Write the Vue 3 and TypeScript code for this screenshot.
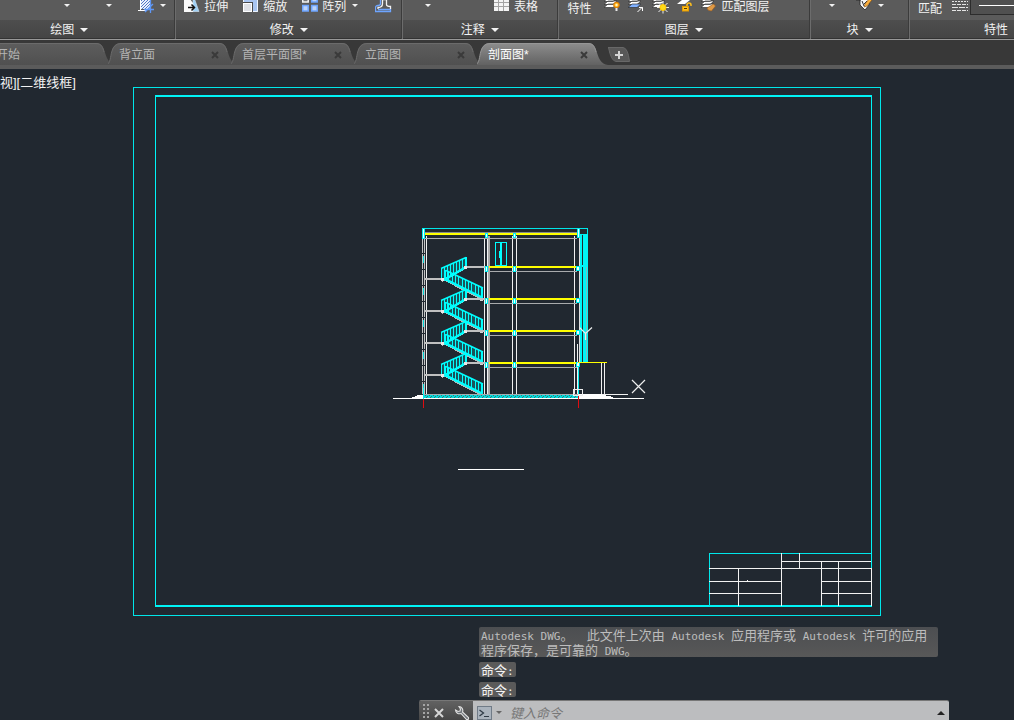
<script setup lang="ts">
import { ref } from 'vue'

interface Tab { name: string; closable: boolean }

const tabs: Tab[] = [
  { name: '开始', closable: false },
  { name: '背立面', closable: true },
  { name: '首层平面图*', closable: true },
  { name: '立面图', closable: true },
  { name: '剖面图*', closable: true },
]
const active = ref(4)
const command = ref('')

const storeys = [0, 32, 64, 96]

// Balusters of the two flights in one storey, relative to the top storey
const upFlight = Array.from({ length: 9 }, (_, i) => {
  const x = 441.5 + i * 3
  return `M${x} ${Math.round(268 - i * 1.35)}V${Math.round(280 - i * 1.6)}`
}).join('')
const downFlight = Array.from({ length: 12 }, (_, i) => {
  const x = 445.5 + i * 3.3
  return `M${Math.floor(x) + 0.5} ${Math.round(270 + i * 1.5)}V${Math.round(281 + i * 1.5)}`
}).join('')
</script>

<template>
  <div class="app">
    <header class="ribbon">
      <section class="panel p-draw">
        <div class="tools">
          <div class="pair">
            <button class="drop" aria-label="圆弧选项"><i class="caret small"></i></button>
            <button class="drop" aria-label="矩形选项"><i class="caret small"></i></button>
          </div>
          <div class="split">
            <button class="tool" aria-label="图案填充">
              <svg width="16" height="16" viewBox="0 0 16 16">
                <rect x="2" y="0" width="10" height="10" fill="#eaf1fd" />
                <path d="M2 3l3-3M2 6l6-6M2 9l9-9M4 10l8-8M7 10l5-5M10 10l2-2" stroke="#5577c4" />
                <path d="M2.500 0v11.500M0 11.500h8" stroke="#fff" fill="none" />
                <path d="M12.500 0v14M6 10.500h10M7 13l8-8" stroke="#5f97f5" stroke-width="1.300" fill="none" />
              </svg>
            </button>
            <button class="drop" aria-label="图案填充选项"><i class="caret small"></i></button>
          </div>
        </div>
        <button class="title">绘图<i class="caret"></i></button>
      </section>

      <section class="panel p-modify">
        <div class="tools">
          <button class="tool">
            <svg width="16" height="16" viewBox="0 0 16 16">
              <path d="M9 0h1.500l4.500 12.500H9z" fill="#9fd0f5" stroke="#d5eafa" stroke-width=".6" />
              <path d="M0 0h6l3 4v9H0z" fill="#fbfbfb" />
              <path d="M4 8.500h6M7.500 5.500l3 3-3 3" stroke="#111" stroke-width="1.500" fill="none" />
            </svg>拉伸
          </button>
          <button class="tool">
            <svg width="16" height="16" viewBox="0 0 16 16">
              <path d="M0 0h15v13H9V4H0z" fill="#a9c6f2" />
              <path d="M.5 0v3.500M14.500 0v12.500H10" stroke="#eef4fd" fill="none" />
              <rect x="0.500" y="4.500" width="8" height="8" fill="#dfe1e6" stroke="#fff" />
              <path d="M9.500 3v10M0 3.500h10" stroke="#4b4b4b" />
            </svg>缩放
          </button>
          <div class="split">
            <button class="tool">
              <svg width="16" height="16" viewBox="0 0 16 16" stroke-width="1.500">
                <rect x="0.700" y="-2.500" width="5.500" height="5.500" fill="#777" stroke="#f4f4f4" />
                <rect x="9.700" y="-2.500" width="5.500" height="5.500" fill="#bcd4fa" stroke="#6ea5ff" />
                <rect x="0.700" y="6.500" width="5.500" height="5.500" fill="#bcd4fa" stroke="#6ea5ff" />
                <rect x="9.700" y="6.500" width="5.500" height="5.500" fill="#bcd4fa" stroke="#6ea5ff" />
              </svg>阵列
            </button>
            <button class="drop" aria-label="阵列选项"><i class="caret small"></i></button>
          </div>
          <button class="tool" aria-label="偏移">
            <svg width="17" height="16" viewBox="0 0 17 16" fill="none">
              <path d="M5.500 0v4.500Q5.500 6.500 3 6.500.5 6.500.5 9V12.500H15.500V10.500H3" stroke="#6ea5ff" stroke-width="1.300" />
              <path d="M7.500 0v4.500Q7.500 8.500 3 8.500V10M11.500 0v5.500Q11.500 7.500 15.500 7.500V10M7 .5h5" stroke="#f3f3f3" stroke-width="1.300" />
            </svg>
          </button>
        </div>
        <button class="title">修改<i class="caret"></i></button>
      </section>

      <section class="panel p-note">
        <div class="tools">
          <button class="drop" aria-label="引线选项"><i class="caret small"></i></button>
          <button class="tool">
            <svg width="16" height="16" viewBox="0 0 16 16">
              <path d="M0 0h15v12H0z" fill="#f4f4f4" />
              <path d="M0 3.500h15M0 7.500h15M4.500 0v12M9.500 0v12" stroke="#a3a3a3" />
            </svg>表格
          </button>
        </div>
        <button class="title">注释<i class="caret"></i></button>
      </section>

      <section class="panel p-layer">
        <div class="tools">
          <button class="tool low">特性</button>
          <div class="layer-icons">
            <button class="tool" aria-label="关闭图层">
              <svg width="16" height="16" viewBox="0 0 16 16">
                <path d="M4 -1h9l-4 3.500H0zM4 2h9l-4 3.500H0zM4 5h9l-4 3.500H0z" fill="#fff" stroke="#333" stroke-width=".7" />
                <circle cx="12.500" cy="6" r="2.800" fill="#ffb21d" stroke="#e07b00" />
                <circle cx="12.500" cy="6" r="1.200" fill="#fff6c0" />
                <path d="M12.500 9v3" stroke="#e8e8e8" stroke-width="2" />
              </svg>
            </button>
            <button class="tool" aria-label="隔离图层">
              <svg width="16" height="16" viewBox="0 0 16 16">
                <path d="M4 -1h9l-4 3.500H0zM4 2h9l-4 3.500H0z" fill="#fff" stroke="#333" stroke-width=".7" />
                <path d="M4 5h9l-4 3.500H0z" fill="#7fb0ff" stroke="#333" stroke-width=".7" />
                <path d="M9.500 13l5-5M11 8.500h3.500V12" stroke="#fff" fill="none" />
              </svg>
            </button>
            <button class="tool" aria-label="冻结图层">
              <svg width="17" height="16" viewBox="0 0 17 16">
                <path d="M4 -1h9l-4 3.500H0zM4 2h9l-4 3.500H0zM4 5h9l-4 3.500H0z" fill="#fff" stroke="#333" stroke-width=".7" />
                <path d="M6.500 4l9 9M6.500 13l9-9M11 2.500v12M5 8.500h12" stroke="#eee" />
                <circle cx="11" cy="8.500" r="3" fill="#ffdc19" stroke="#ffc400" />
              </svg>
            </button>
            <button class="tool" aria-label="解锁图层">
              <svg width="16" height="16" viewBox="0 0 16 16">
                <path d="M5 1h8L8 5H0z" fill="#fff" />
                <path d="M10 8V6q0-2 2-2t2 2v1" stroke="#ffc01d" stroke-width="1.500" fill="none" />
                <rect x="5.500" y="7.500" width="6" height="4.500" fill="#ffc01d" stroke="#e59b00" />
                <path d="M7 9.500h3" stroke="#553a00" />
              </svg>
            </button>
            <button class="tool tight">
              <svg width="16" height="16" viewBox="0 0 16 16">
                <path d="M4 -1h9l-4 3.500H0zM4 2h9l-4 3.500H0zM4 5h9l-4 3.500H0z" fill="#fff" stroke="#333" stroke-width=".7" />
                <path d="M12.500 5l2 2-4 5q-4 0-4.500-3z" fill="#e09a45" stroke="#9a5a1c" stroke-width=".6" />
              </svg>匹配图层
            </button>
          </div>
        </div>
        <button class="title">图层<i class="caret"></i></button>
      </section>

      <section class="panel p-block">
        <div class="tools">
          <button class="drop" aria-label="插入选项"><i class="caret small"></i></button>
          <div class="split">
            <button class="tool" aria-label="编辑属性">
              <svg width="16" height="16" viewBox="0 0 16 16">
                <path d="M0 1h5M4 0h9v6l-4 5-5-5z" fill="#f6f6f6" stroke="#222" stroke-width=".8" />
                <path d="M6 2l2 5M11 2L8 5" stroke="#333" />
                <path d="M13 0L9 5l-1 3 3-1 5-6z" fill="#ffb13b" stroke="#7b4a10" stroke-width=".6" />
              </svg>
            </button>
            <button class="drop" aria-label="编辑属性选项"><i class="caret small"></i></button>
          </div>
        </div>
        <button class="title">块<i class="caret"></i></button>
      </section>

      <section class="panel p-prop">
        <div class="tools">
          <button class="tool low">匹配</button>
          <div class="linetype">
            <svg width="16" height="16" viewBox="0 0 16 16" stroke="#e4e4e4" stroke-dasharray="4 1" shape-rendering="crispEdges">
              <path d="M0 1.500h16" stroke-dasharray="2 1" /><path d="M0 4.500h16M0 10.500h16" /><path d="M0 7.500h16" stroke-dasharray="6 1" />
            </svg>
            <button class="line-box" aria-label="线宽"><i></i></button>
          </div>
        </div>
        <button class="title">特性</button>
      </section>
    </header>

    <nav class="tabs">
      <div v-for="(t, i) in tabs" :key="t.name" class="tab" :class="{ active: i === active }">
        <svg class="shape" viewBox="0 0 134 22" preserveAspectRatio="none" aria-hidden="true">
          <defs>
            <linearGradient :id="'g' + i" x1="0" y1="0" x2="0" y2="1">
              <stop offset="0" :stop-color="i === active ? '#8d8d8d' : '#5d5d5d'" />
              <stop offset="1" :stop-color="i === active ? '#626262' : '#505050'" />
            </linearGradient>
          </defs>
          <path d="M-2 22C3 20 2 14 4 8Q6 0 13 0H111C123 0 117 20 131 22Z" :fill="`url(#g${i})`" />
          <path d="M-2 22C3 20 2 14 4 8Q6 .5 13 .5H111C117 .5 118 5 119 9" fill="none" :stroke="i === active ? '#969696' : '#6b6b6b'" />
        </svg>
        <button class="name" @click="active = i">{{ t.name }}</button>
        <button v-if="t.closable" class="close" aria-label="关闭">
          <svg width="8" height="8" viewBox="0 0 8 8"><path d="M1 1l6 6M7 1L1 7" stroke="#3a3a3a" stroke-width="2" /></svg>
        </button>
      </div>
      <button class="add" aria-label="新图形">
        <svg width="22" height="15" viewBox="0 0 22 15">
          <path d="M0 .5H15Q20 1 21.500 14.500H8Q3 14 .5 .5Z" fill="#585858" stroke="#686868" />
          <path d="M11 4v8M7 8h8" stroke="#d5d5d5" stroke-width="2" />
        </svg>
      </button>
    </nav>

    <main class="canvas">
      <div class="view-label">视][二维线框]</div>
      <svg class="drawing" viewBox="0 69 1014 651" preserveAspectRatio="xMidYMin meet" fill="none" shape-rendering="crispEdges">
        <defs>
          <pattern id="hatch" x="423" y="395" width="4" height="3" patternUnits="userSpaceOnUse">
            <rect width="4" height="3" fill="#00dede" /><path d="M0 1h1v1H0zM2 0h1v1H2zM3 2h1v1H3z" fill="#426c72" />
          </pattern>
        </defs>
        <!-- sheet frame -->
        <g stroke="#00e6e9">
          <rect x="133.500" y="87.500" width="747" height="528" />
          <path d="M155.500 96V606M871.500 96V606" stroke="#00f4f6" />
          <path d="M155 96H872M155 606H872" stroke="#00f4f6" stroke-width="2" />
        </g>
        <!-- title block -->
        <path d="M709.500 606V553.500H871" stroke="#00e6e9" />
        <path d="M781.500 553V606M799.500 553V568M781 561.500H871M709 568.500H871M738.500 568V606M709 581.500H781M821 581.500H871M709 593.500H781M821 593.500H871M821.500 561V606M838.500 561V606M871.500 568V606M747 580.500h1" stroke="#f2f2f2" />

        <!-- walls and columns -->
        <path d="M422.500 238V394M424.500 238V394" stroke="#c4c4c4" stroke-dasharray="15 1" />
        <path d="M426.500 236V394" stroke="#f0f0f0" />
        <path d="M423.500 238V394" stroke="#00cfd2" stroke-dasharray="7 25" stroke-dashoffset="14" />
        <path d="M484.500 238V394M487.500 238V394M512.500 236V394M516.500 236V394M574.500 236V394M577.500 344V395" stroke="#f0f0f0" />
        <path d="M489 236V394" stroke="#aaa" stroke-width="2" />
        <path d="M579.500 236V362" stroke="#e0e0e0" />

        <!-- roof -->
        <path d="M422 228.500H588M587.500 228V236M578.500 234.500H588" stroke="#00e5e8" />
        <path d="M424 232.500H580" stroke="#858a8e" />
        <path d="M424 234H580" stroke="#ff0" stroke-width="2" />
        <path d="M424 238.500H577" stroke="#aeb0b2" />
        <path d="M422.500 228.500h2v10h-2zM577.500 228.500h2v9h-2z" fill="#eaffff" stroke="#00f0f0" />

        <!-- storey slabs, beams and stairs -->
        <g v-for="dy in storeys" :key="dy" :transform="`translate(0 ${dy})`">
          <path d="M489 267H580" stroke="#ff0" stroke-width="2" />
          <path d="M489 271.500H577" stroke="#a9abad" />
          <path d="M465 267H487M424 279H443" stroke="#c0c0c0" stroke-width="2" />
          <path d="M442 281L465 268M445 280L482 299" stroke="#b8b8b8" stroke-width="2" />
          <g stroke="#0ff" shape-rendering="auto">
            <path d="M441 269L466 258V268L443 280ZM446 270L483 288V297L446 280Z" fill="#0ff" fill-opacity=".2" stroke="none" />
            <path d="M441 268.500L466 257.500M446 270.500L483 288" stroke-width="1.500" />
            <path d="M444 280L466 267M445 279L481 297" stroke-width="2.500" />
            <path d="M466.500 257V268M482.500 287V298" />
            <path :d="upFlight" /><path :d="downFlight" />
          </g>
          <rect x="441" y="278" width="3" height="3" fill="#e8e8e8" />
          <rect x="464" y="266" width="3" height="3" fill="#e8e8e8" />
          <rect x="480" y="298" width="3" height="3" fill="#d5d5d5" />
          <path d="M485.500 266.500h2v5h-2zM513.500 266.500h2v5h-2zM576.500 266.500h3v4h-3z" fill="#eaffff" stroke="#00f0f0" />
        </g>
        <path d="M485.500 233.500h2v4h-2zM513.500 233.500h2v4h-2z" fill="#eaffff" stroke="#00f0f0" />

        <!-- roof door -->
        <path d="M495.500 266V242.500H506.500V266M495 265.500H507" stroke="#0ff" />
        <path d="M501 243V266" stroke="#0ff" stroke-width="2" />
        <path d="M499 251h3v7h-3z" fill="#0ff" />

        <!-- facade -->
        <path d="M580 234h2v128h-2zM583 234h5v128h-5zM580 265h8v2h-8z" fill="#00f4f6" />
        <path d="M586.500 267V360" stroke="#7bbcc0" />

        <!-- porch and ground -->
        <path d="M578 362.500H607" stroke="#ff0" />
        <path d="M601.500 363V394M604.500 363V394M578 394.500H628" stroke="#f0f0f0" />
        <path d="M423 394.500H578" stroke="#a5adb0" />
        <path d="M423 395H578V398H423z" fill="url(#hatch)" />
        <path d="M393 398.500H644" stroke="#fff" />
        <path d="M409 399L418 395H424V399ZM579 394H600L613 397V399H579Z" fill="#fff" />
        <path d="M423.500 388V400M578.500 366V394" stroke="#0ee" />
        <path d="M423.500 399V408M578.500 395V408" stroke="#e00c10" />
        <path d="M573.500 389.500h9v6h-9z" stroke="#eee" />
        <g stroke="#eee" shape-rendering="auto" stroke-width="1.200">
          <path d="M579.500 327.500L585.500 333.500L592 327.500M585.500 333V340M632 380L645 393M645 380L632 393" />
        </g>
        <path d="M458 469.500H524" stroke="#fff" />
      </svg>

      <div class="command">
        <div class="history">
          <p class="notice"><span>Autodesk DWG</span>。<span>&nbsp; </span>此文件上次由<span> Autodesk </span>应用程序或<span> Autodesk </span>许可的应用程序保存，是可靠的<span> DWG</span>。</p>
          <p>命令<span>:</span></p>
          <p>命令<span>:</span></p>
        </div>
        <form class="bar" @submit.prevent>
          <div class="grip">
            <i class="dots"></i>
            <button type="button" aria-label="关闭命令行">
              <svg width="10" height="10" viewBox="0 0 10 10"><path d="M1 1l8 8M9 1L1 9" stroke="#d6d6d6" stroke-width="2" /></svg>
            </button>
            <button type="button" aria-label="自定义">
              <svg width="16" height="16" viewBox="0 0 16 16">
                <path d="M5 1.500A4 4 0 0 1 8.500 7L14.500 12.500Q15 15 12.500 14.500L7 8.500A4 4 0 0 1 1.500 5L4 6.500 6 6 6.500 4Z" fill="#6f757a" stroke="#e0e0e0" stroke-width="1.100" />
              </svg>
            </button>
          </div>
          <div class="entry">
            <button type="button" class="prompt" aria-label="最近使用的命令">
              <svg width="15" height="14" viewBox="0 0 15 14">
                <rect x="0.500" y="0.500" width="14" height="13" fill="#aab3bd" stroke="#707b87" />
                <path d="M2.500 4l4 3-4 3" stroke="#303b47" stroke-width="1.300" fill="none" /><path d="M7 10.500h5" stroke="#303b47" />
              </svg>
              <i class="caret gray"></i>
            </button>
            <input v-model="command" aria-label="命令" placeholder="键入命令" />
            <button type="button" class="up" aria-label="展开历史"><i></i></button>
          </div>
        </form>
      </div>
    </main>
  </div>
</template>

<style>
body { margin: 0; background: #212830; }
</style>

<style scoped>
.app {
  display: flex;
  flex-direction: column;
  height: 100vh;
  overflow: hidden;
  background: #212830;
  color: #f2f2f2;
  font: 12px/16px "Liberation Sans", "Noto Sans CJK SC", sans-serif;
}
button {
  display: flex;
  align-items: center;
  padding: 0;
  border: 0;
  background: none;
  color: inherit;
  font: inherit;
  white-space: nowrap;
}
svg { display: block; flex: none; }

.ribbon {
  display: flex;
  flex: none;
  background: #5b5b5b;
  border-bottom: 1px solid #999;
}
.panel {
  display: flex;
  flex-direction: column;
  min-width: 0;
  overflow: hidden;
  box-sizing: border-box;
  border-right: 1px solid #3b3b3b;
  border-left: 1px solid #6c6c6c;
}
.p-draw { flex: 176 1 0; border-left: 0; }
.p-modify { flex: 227 1 0; }
.p-note { flex: 155 1 0; }
.p-layer { flex: 253 1 0; }
.p-block { flex: 98 1 0; }
.p-prop { flex: 105 1 0; border-right: 0; }
.tools {
  display: flex;
  align-items: flex-start;
  height: 20px;
}
.pair { display: flex; gap: 32px; }
.split { display: flex; gap: 4px; }
.tool { gap: 4px; height: 14px; }
.tool svg { height: 16px; }
.tool.low { height: 18px; }
.drop { justify-content: center; width: 10px; height: 10px; }
.p-draw .tools { gap: 24px; padding-left: 62px; }
.p-modify .tools { gap: 15px; padding-left: 8px; }
.p-note .tools { gap: 61px; padding-left: 20px; }
.p-layer .tools { gap: 12px; padding-left: 9px; }
.p-block .tools { gap: 19px; padding-left: 16px; }
.p-prop .tools { gap: 10px; padding-left: 8px; }
.layer-icons { display: flex; gap: 8px; }
.tool.tight { gap: 5px; }
.linetype { display: flex; flex: 1; gap: 2px; }
.line-box {
  flex: 1;
  height: 15px;
  padding-left: 8px;
  align-items: flex-start;
  border: 1px solid #2c2c2c;
  border-width: 0 0 1px 1px;
  background: #505050;
}
.line-box i { flex: 1; margin-top: 5px; border-top: 1px solid #fff; }
.title {
  justify-content: center;
  gap: 6px;
  box-sizing: border-box;
  height: 19px;
  padding-top: 2px;
  background: linear-gradient(#4e4e4e, #454545);
  border-bottom: 1px solid #333;
}
.p-draw .title { padding-right: 36px; }
.p-prop .title { justify-content: flex-start; padding-left: 74px; }
.caret {
  width: 0;
  border: 4px solid transparent;
  border-top-color: #f2f2f2;
  border-bottom: 0;
}
.caret.small { border-width: 3px 3px 0; }
.caret.gray { border-width: 3px 3px 0; border-top-color: #666; }

.tabs {
  display: flex;
  flex: none;
  align-items: flex-end;
  height: 25px;
  padding-right: 16px;
  background: #383838;
  border-bottom: 4px solid #5b5b5b;
  margin-left: -15px;
}
.tab {
  position: relative;
  display: flex;
  align-items: center;
  justify-content: space-between;
  box-sizing: border-box;
  width: 123px;
  height: 22px;
  padding: 2px 12px 0 11px;
  color: #b4b4b4;
}
.tab.active { z-index: 1; color: #fff; }
.shape { position: absolute; inset: 0 -11px 0 0; width: 134px; height: 22px; }
.name, .close { position: relative; }
.add { height: 22px; padding-left: 8px; }

.canvas { position: relative; flex: 1; min-height: 0; overflow: hidden; }
.drawing { width: 100%; height: 100%; }
.view-label { position: absolute; top: 6px; left: 0; font-size: 13px; }
.command { position: absolute; left: 419px; right: 65px; bottom: -4px; }
.history {
  display: flex;
  flex-direction: column;
  align-items: flex-start;
  gap: 5px;
  padding: 0 11px 3px 60px;
  font: 13px/15px "Noto Sans CJK SC", sans-serif;
}
.history p { margin: 0; padding: 0 2px; border-radius: 2px; background: #5a5a5a; color: #f4f4f4; }
.history .notice { background: linear-gradient(#4c4e51, #585858); color: #bdbdbd; }
.history span { font: 11px/11px "DejaVu Sans Mono", monospace; white-space: pre-wrap; }
.bar { display: flex; height: 23px; border-top: 1px solid #777; border-radius: 2px 2px 0 0; overflow: hidden; }
.grip {
  display: flex;
  align-items: center;
  gap: 10px;
  box-sizing: border-box;
  width: 54px;
  padding-left: 4px;
  background: linear-gradient(#626262, #414141);
}
.dots {
  width: 6px;
  height: 18px;
  margin-right: -5px;
  background: conic-gradient(transparent 75%, #a5a5a5 0) 0 0 / 4px 4px;
}
.entry { display: flex; flex: 1; align-items: center; padding: 0 4px; background: #bcbdbf; }
.prompt { gap: 4px; }
.entry input {
  flex: 1;
  min-width: 0;
  padding: 0 8px;
  border: 0;
  outline: 0;
  background: none;
  color: #333;
  font: italic 13px/18px "Noto Sans CJK SC", sans-serif;
}
.entry input::placeholder { color: #777; opacity: 1; }
.up i { border: 4px solid transparent; border-top: 0; border-bottom-color: #222; }
</style>
